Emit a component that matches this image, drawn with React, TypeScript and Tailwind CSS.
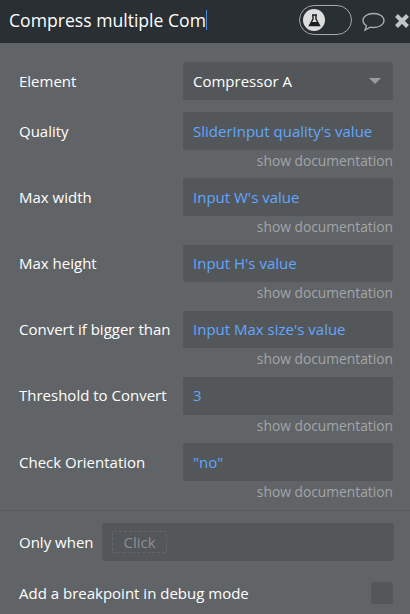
const font = { fontFamily: '"Open Sans", sans-serif' };

const rows = [
  { label: "Quality", value: "SliderInput quality's value" },
  { label: "Max width", value: "Input W's value" },
  { label: "Max height", value: "Input H's value" },
  { label: "Convert if bigger than", value: "Input Max size's value" },
  { label: "Threshold to Convert", value: "3" },
  { label: "Check Orientation", value: '"no"' },
];

function Row({ label, value }: { label: string; value: string }) {
  return (
    <div className="h-[66.2px]">
      <div className="flex h-[37.6px] items-center">
        <div className="w-[164px] shrink-0 text-[15px] whitespace-nowrap text-white">{label}</div>
        <div className="flex h-[37.6px] w-[210px] shrink-0 items-center rounded-[2px] bg-[#53575a] pl-[10px] text-[15px] whitespace-nowrap text-[#62a6ff]">
          {value}
        </div>
      </div>
      <div className="mt-[1px] text-right text-[13.8px] leading-[20px] text-[#a3a5a7]">show documentation</div>
    </div>
  );
}

export default function App() {
  return (
    <div className="h-[614px] w-[410px] overflow-hidden bg-[#606467]" style={font}>
      <div className="flex h-[43px] items-center bg-[#292f33] pl-[9px]">
        <div className="mt-[-2px] flex w-[290px] shrink-0 items-center text-[17.6px] text-white">
          Compress multiple Com
          <span className="h-[20px] w-px bg-[#4a90e2]" />
        </div>
        <div className="mt-[-3px] flex h-[30px] w-[53px] shrink-0 items-center rounded-full border border-[#a5a8a9] pl-[3px]">
          <div className="flex h-[22px] w-[22px] items-center justify-center rounded-full bg-[#dcdddd]">
            <svg width="13" height="13" viewBox="0 0 13 13">
              <path d="M4 1h5M5 1v4L1.500 11.500h10L8 5V1" fill="none" stroke="#1d1d1f" strokeWidth="1.4" />
              <path d="M3.500 8h6l2 3.500h-10z" fill="#1d1d1f" />
            </svg>
          </div>
        </div>
        <svg className="ml-[9px] shrink-0" width="25" height="22" viewBox="0 0 25 22">
          <path d="M12.500 2.500c6 0 10.500 3 10.500 7s-4.500 7-10.500 7c-1.200 0-2.300-.1-3.300-.4L4 19l1.500-4.300C3.200 13.400 2 11.600 2 9.500c0-4 4.500-7 10.500-7z" fill="none" stroke="#a9b0b3" strokeWidth="1.3" />
        </svg>
        <svg className="ml-[8px] mt-[-1px] shrink-0" width="16" height="16" viewBox="0 0 16 16">
          <path d="M2.500 2.500l11 11M13.500 2.500l-11 11" stroke="#c3c6c7" strokeWidth="4" />
        </svg>
      </div>

      <div className="pl-[19px] pr-[17px] pt-[19px]">
        <div className="flex h-[38px] items-center">
          <div className="w-[164px] shrink-0 text-[15px] text-white">Element</div>
          <div className="flex h-[38px] w-[210px] shrink-0 items-center justify-between rounded-[2px] bg-[#53575a] pl-[10px] pr-[12px] text-[15px] text-white">
            Compressor A
            <span className="h-0 w-0 border-x-[6px] border-t-[6px] border-x-transparent border-t-[#9a9d9f]" />
          </div>
        </div>
        <div className="mt-[12.2px]">
          {rows.map((r) => (
            <Row key={r.label} label={r.label} value={r.value} />
          ))}
        </div>
      </div>

      <div className="mt-[0.6px] border-t border-[#565a5d] pl-[19px] pr-[16px] pt-[12px]">
        <div className="flex h-[38px] items-center">
          <div className="w-[83px] shrink-0 text-[15px] text-white">Only when</div>
          <div className="flex h-[38px] w-[292px] shrink-0 items-center rounded-[2px] bg-[#53575a] pl-[10px]">
            <span className="flex h-[22px] w-[55px] items-center justify-center rounded-[2px] border border-dashed border-[#63676a] text-[15px] text-[#8d9092]">
              Click
            </span>
          </div>
        </div>
        <div className="mt-[21px] flex h-[22px] items-center justify-between pr-px">
          <div className="text-[15px] text-white">Add a breakpoint in debug mode</div>
          <div className="h-[22px] w-[22px] rounded-[2px] bg-[#53575a]" />
        </div>
      </div>
    </div>
  );
}
